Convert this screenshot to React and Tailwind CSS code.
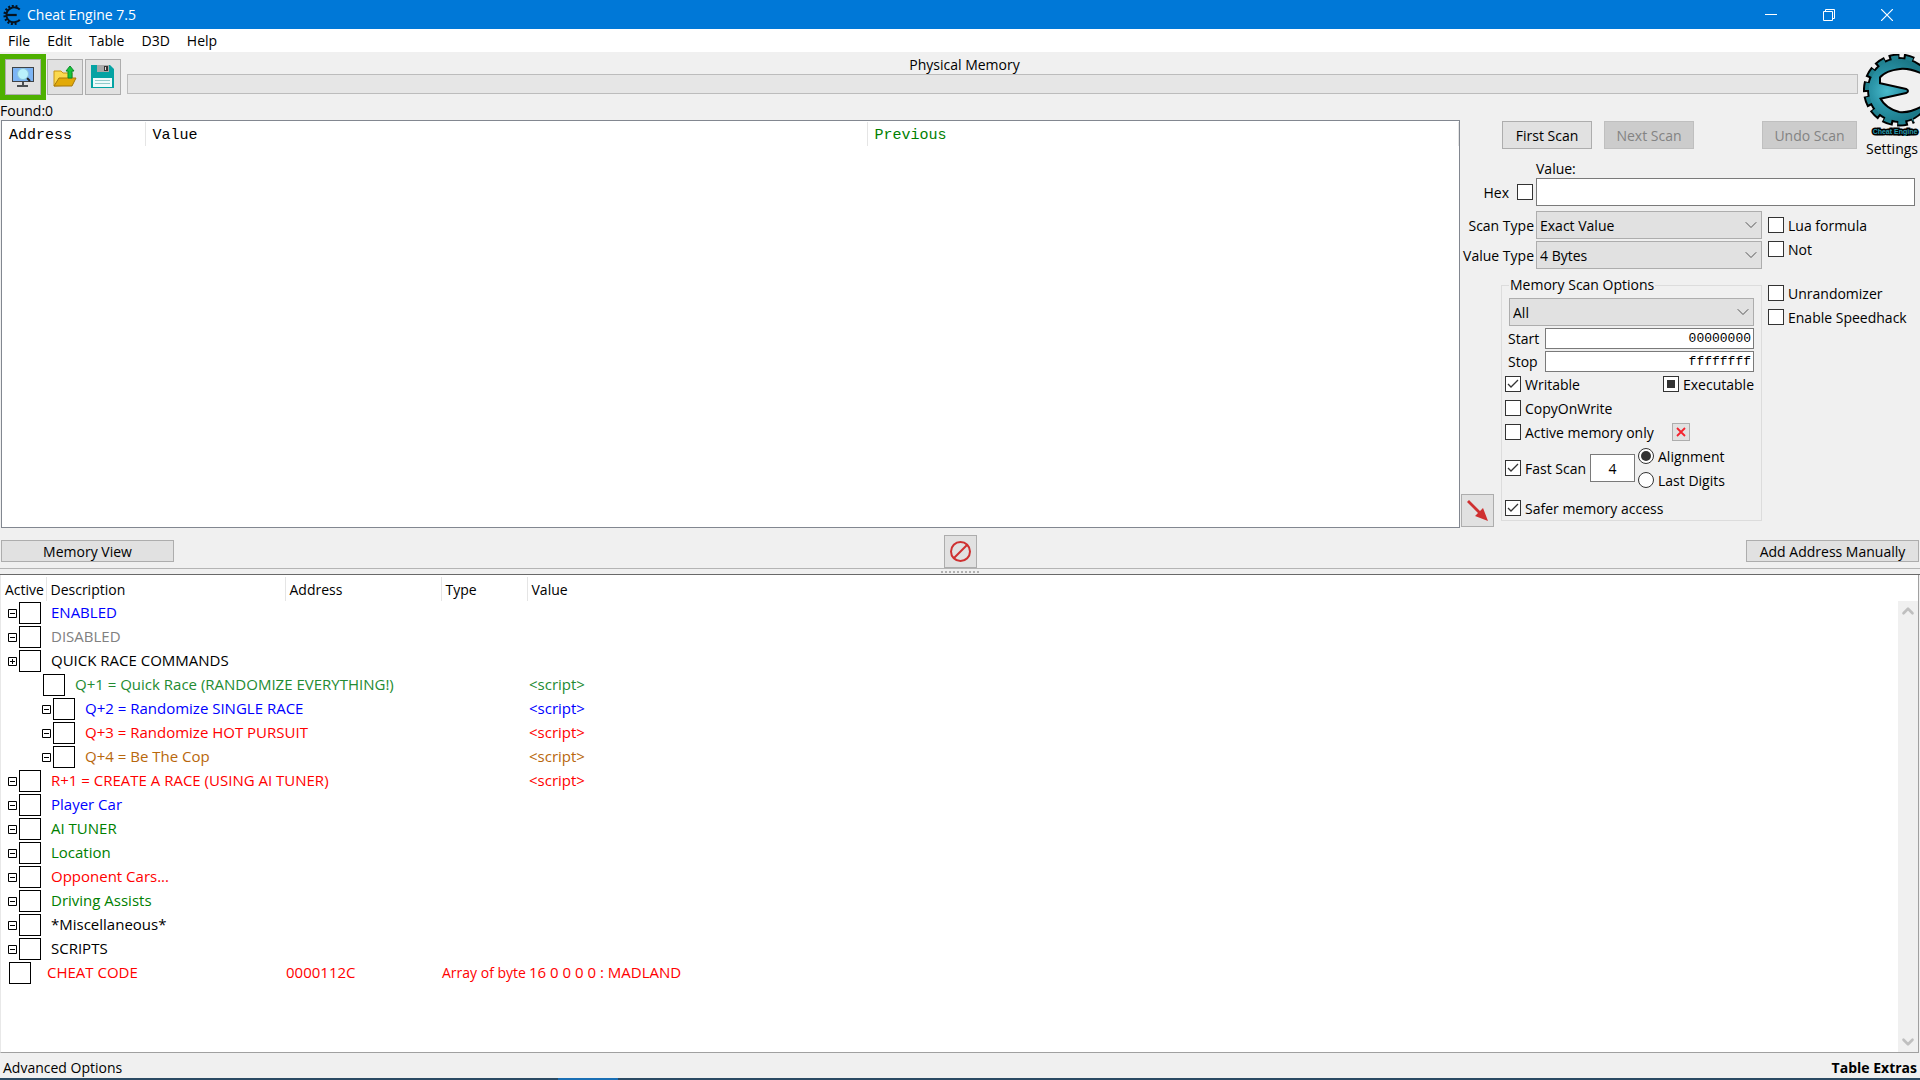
import React, { useEffect, useRef } from "react";
import { ChevronDown, ChevronUp } from "lucide-react";

const records = [
  { name: "ENABLED", color: "text-[#0000ff]", toggle: "-", indent: "pl-[7px] gap-[10px]" },
  { name: "DISABLED", color: "text-[#808080]", toggle: "-", indent: "pl-[7px] gap-[10px]" },
  { name: "QUICK RACE COMMANDS", color: "text-black", toggle: "+", indent: "pl-[7px] gap-[10px]" },
  { name: "Q+1 = Quick Race (RANDOMIZE EVERYTHING!)", color: "text-[#238b32]", indent: "pl-[42px] gap-[10px]", value: "<script>" },
  { name: "Q+2 = Randomize SINGLE RACE", color: "text-[#0000ff]", toggle: "-", indent: "pl-[41px] gap-[10px]", value: "<script>" },
  { name: "Q+3 = Randomize HOT PURSUIT", color: "text-[#ff0000]", toggle: "-", indent: "pl-[41px] gap-[10px]", value: "<script>" },
  { name: "Q+4 = Be The Cop", color: "text-[#b8670c]", toggle: "-", indent: "pl-[41px] gap-[10px]", value: "<script>" },
  { name: "R+1 = CREATE A RACE (USING AI TUNER)", color: "text-[#ff0000]", toggle: "-", indent: "pl-[7px] gap-[10px]", value: "<script>" },
  { name: "Player Car", color: "text-[#0000ff]", toggle: "-", indent: "pl-[7px] gap-[10px]" },
  { name: "AI TUNER", color: "text-[#008000]", toggle: "-", indent: "pl-[7px] gap-[10px]" },
  { name: "Location", color: "text-[#008000]", toggle: "-", indent: "pl-[7px] gap-[10px]" },
  { name: "Opponent Cars...", color: "text-[#ff0000]", toggle: "-", indent: "pl-[7px] gap-[10px]" },
  { name: "Driving Assists", color: "text-[#008000]", toggle: "-", indent: "pl-[7px] gap-[10px]" },
  { name: "*Miscellaneous*", color: "text-black", toggle: "-", indent: "pl-[7px] gap-[10px]" },
  { name: "SCRIPTS", color: "text-black", toggle: "-", indent: "pl-[7px] gap-[10px]" },
  { name: "CHEAT CODE", color: "text-[#ff0000]", indent: "pl-2 gap-4", address: "0000112C", type: "Array of byte", value: "16 0 0 0 0 : MADLAND" },
];

const BODY = "M58 13 C50 7 43 5 36 5 C18 6 6 20 6 36 C6 53 19 66 36 67 C45 67 52 64 58 58 L58 54 C50 58 44 60 36 59 C28 57 20 52 16 44 L43 38 Q45 37 43 36 L16 30 L16 23 C20 18 28 15 37 14 C44 13 50 15 58 18 Z";
const RIM = "M50 7 A32 32 0 1 0 50 65";

function GearLogo({ className, mono }) {
  return (
    <svg className={className} viewBox={mono ? "0 0 62 72" : "0 0 57 82"} aria-hidden="true">
      <defs>
        <radialGradient id="metal" gradientUnits="userSpaceOnUse" cx="24" cy="37" r="36">
          <stop offset="0" stopColor="#48b9cb" />
          <stop offset="0.45" stopColor="#2a94a7" />
          <stop offset="1" stopColor="#1b7787" />
        </radialGradient>
      </defs>
      {mono ? (
        <g fill="none" stroke="#06121f">
          <path d={RIM} strokeWidth="9" strokeDasharray="7 6" />
          <path d="M59 16 C50 8 35 6 26 12 C13 19 10 31 11 40 C13 54 25 64 39 62 C46 61 55 59 59 53" strokeWidth="7" />
          <path d="M13 36 H48" strokeWidth="8" />
        </g>
      ) : (
        <g>
          <path d={RIM} fill="none" stroke="#000" strokeWidth="9" strokeDasharray="10 4" />
          <path d={BODY} fill="#000" stroke="#000" strokeWidth="4" strokeLinejoin="round" />
          <path d={RIM} fill="none" stroke="#20818f" strokeWidth="5" strokeDasharray="7 7" strokeDashoffset="-1" />
          <path d={BODY} fill="url(#metal)" />
          <text x="32" y="80" textAnchor="middle" fontSize="7" fontWeight="700" fontFamily="Liberation Sans, sans-serif" fill="#2a9aac" stroke="#000" strokeWidth="3" paintOrder="stroke">
            Cheat Engine
          </text>
        </g>
      )}
    </svg>
  );
}

function ProcessIcon() {
  return (
    <svg className="h-6 w-6" viewBox="0 0 24 24" aria-hidden="true">
      <rect x="1" y="2" width="22" height="15" fill="#3f4347" />
      <rect x="2" y="3" width="20" height="13" fill="#7db5f5" />
      <path d="M11 17h2v3h4v2H6v-2h5z" fill="#4b4f52" />
      <path d="M15 12l4 4" stroke="#222" strokeWidth="2" />
      <circle cx="12" cy="9" r="5.500" fill="#b9f0fb" stroke="#8ac4dc" />
    </svg>
  );
}

function OpenIcon() {
  return (
    <svg className="h-6 w-6" viewBox="0 0 24 24" aria-hidden="true">
      <path d="M1 21V6h7l2 2h9v12z" fill="#fbd94f" stroke="#c79415" />
      <path d="M1 21l5-8h17l-4 8z" fill="#e2aa08" stroke="#a8790a" />
      <path d="M17 1l4 5h-2v7h-4V6h-2z" fill="#16c43b" stroke="#0b8a2a" />
    </svg>
  );
}

function SaveIcon() {
  return (
    <svg className="h-6 w-6" viewBox="0 0 24 24" aria-hidden="true">
      <path d="M0 0h19l4 4v19H0z" fill="#04a3a3" />
      <path d="M6 0h12v7H6z" fill="#a9a9a9" />
      <path d="M13 1h4v5h-4z" fill="#353535" />
      <path d="M14 2h1v3h-1z" fill="#ddd" />
      <path d="M2 13h19v9H2z" fill="#eefafa" />
      <path d="M4 15.500h15M4 18.500h15" stroke="#8fcaca" />
    </svg>
  );
}

function ToolButton({ label, children }) {
  return (
    <button aria-label={label} className="flex h-9 w-9 items-center justify-center border border-[#adadad] bg-[#e1e1e1]">
      {children}
    </button>
  );
}

function CheckField({ label, checked = false, mixed = false, className = "" }) {
  const ref = useRef(null);
  useEffect(() => {
    ref.current.indeterminate = mixed;
  }, [mixed]);

  return (
    <label className={`flex h-6 items-center gap-1 whitespace-nowrap ${className}`}>
      <span className="relative h-4 w-4 shrink-0">
        <input ref={ref} type="checkbox" defaultChecked={checked} className="peer block h-4 w-4 appearance-none border border-[#333] bg-white" />
        <svg className="pointer-events-none absolute inset-0 hidden h-4 w-4 peer-checked:block" viewBox="0 0 16 16">
          <path d="M3 8l3 3 7-7" fill="none" stroke="#333" strokeWidth="1.3" />
        </svg>
        {mixed && <span className="pointer-events-none absolute inset-1 bg-[#333]" />}
      </span>
      <span className="pt-px">{label}</span>
    </label>
  );
}

function RadioField({ label, checked = false }) {
  return (
    <label className="flex h-6 items-center gap-1 whitespace-nowrap">
      <span className="relative h-4 w-4 shrink-0">
        <input type="radio" name="fastscan" defaultChecked={checked} className="peer block h-4 w-4 appearance-none rounded-full border border-[#333] bg-white" />
        <span className="pointer-events-none absolute inset-[3px] hidden rounded-full bg-[#333] peer-checked:block" />
      </span>
      <span className="pt-px">{label}</span>
    </label>
  );
}

function ComboBox({ id, value, className = "", label }) {
  return (
    <div className={`relative h-7 ${className}`}>
      <select id={id} aria-label={label} className="h-7 w-full appearance-none border border-[#adadad] bg-[#e1e1e1] pl-[3px] pt-px">
        <option>{value}</option>
      </select>
      <ChevronDown className="pointer-events-none absolute right-px top-1 h-5 w-5 text-[#555]" strokeWidth={1.2} />
    </div>
  );
}

function TitleBar() {
  return (
    <header className="flex h-[29px] items-center bg-[#0078d7] pl-[3px] pr-1 text-white">
      <GearLogo mono className="h-5 w-[18px]" />
      <h1 className="ml-[6px]">Cheat Engine 7.5</h1>
      <div className="ml-auto flex">
        <button aria-label="Minimize" className="flex h-[29px] w-[58px] items-center justify-center">
          <svg className="h-3 w-3" viewBox="0 0 12 12"><path d="M0 5.5h12" stroke="#fff" /></svg>
        </button>
        <button aria-label="Restore" className="flex h-[29px] w-[58px] items-center justify-center">
          <svg className="h-3 w-3" viewBox="0 0 12 12"><path d="M.5 2.5h9v9h-9zM2.500 2V.5h9v9h-1.500" fill="none" stroke="#fff" /></svg>
        </button>
        <button aria-label="Close" className="flex h-[29px] w-[58px] items-center justify-center">
          <svg className="h-3 w-3" viewBox="0 0 12 12"><path d="M0 0l12 12M12 0L0 12" stroke="#fff" strokeWidth="1.2" /></svg>
        </button>
      </div>
    </header>
  );
}

function FoundList() {
  return (
    <section className="col-start-1 row-span-2 row-start-2 flex flex-col">
      <p className="h-[19px] leading-5">Found:0</p>
      <div className="mx-px flex-1 border border-[#828790] bg-white pt-px">
        <table className="w-full table-fixed text-left font-['Liberation_Mono',monospace] text-[15px]">
          <colgroup>
            <col className="w-[143px]" />
            <col className="w-[722px]" />
            <col />
          </colgroup>
          <thead>
            <tr className="h-6">
              <th className="border-r border-[#e5e5e5] p-0 pl-[7px] pt-[3px] font-normal">Address</th>
              <th className="border-r border-[#e5e5e5] p-0 pl-[7px] pt-[3px] font-normal">Value</th>
              <th className="border-r border-[#e5e5e5] p-0 pl-[7px] pt-[3px] font-normal text-[#008000]">Previous</th>
            </tr>
          </thead>
        </table>
      </div>
    </section>
  );
}

function ScanOptions() {
  return (
    <fieldset className="mb-[6px] w-[261px] border border-[#dcdcdc] px-[3px]">
      <legend className="ml-1 px-px leading-5">Memory Scan Options</legend>
      <ComboBox label="Memory region" value="All" className="mx-1 mt-[3px]" />
      <div className="mr-1 mt-[2px] flex h-[21px] items-center">
        <label htmlFor="start" className="w-10 pl-[3px]">Start</label>
        <input id="start" defaultValue="00000000" className="h-[21px] min-w-0 flex-1 border border-[#7a7a7a] bg-white px-[2px] text-right font-['Liberation_Mono',monospace] text-[13px]" />
      </div>
      <div className="mr-1 mt-[2px] flex h-[21px] items-center">
        <label htmlFor="stop" className="w-10 pl-[3px]">Stop</label>
        <input id="stop" defaultValue="ffffffff" className="h-[21px] min-w-0 flex-1 border border-[#7a7a7a] bg-white px-[2px] text-right font-['Liberation_Mono',monospace] text-[13px]" />
      </div>
      <div className="mr-1 flex justify-between">
        <CheckField label="Writable" checked />
        <CheckField label="Executable" mixed />
      </div>
      <CheckField label="CopyOnWrite" />
      <div className="flex items-center justify-between">
        <CheckField label="Active memory only" />
        <button aria-label="Unpause" className="mr-[68px] flex h-[18px] w-[18px] items-center justify-center border border-[#adadad] bg-[#e1e1e1]">
          <svg className="h-[10px] w-[10px]" viewBox="0 0 10 10"><path d="M1 1l8 8M9 1L1 9" stroke="#f5222d" strokeWidth="1.8" /></svg>
        </button>
      </div>
      <div className="flex items-center">
        <CheckField label="Fast Scan" checked className="w-[85px]" />
        <input aria-label="Alignment value" defaultValue="4" className="mr-[3px] h-7 w-[45px] border border-[#7a7a7a] bg-white text-center" />
        <div>
          <RadioField label="Alignment" checked />
          <RadioField label="Last Digits" />
        </div>
      </div>
      <CheckField label="Safer memory access" checked className="mt-1" />
    </fieldset>
  );
}

function ScanPanel() {
  return (
    <section className="col-span-2 col-start-2 row-start-3">
      <label htmlFor="value" className="block h-[18px] pl-[75px] leading-[18px]">Value:</label>
      <div className="flex h-7 items-center pr-[5px]">
        <label className="flex w-[75px] items-center justify-end gap-2 pr-[3px]">
          <span className="pt-px">Hex</span>
          <input type="checkbox" className="h-4 w-4 appearance-none border border-[#333] bg-white" />
        </label>
        <input id="value" className="h-7 min-w-0 flex-1 border border-[#7a7a7a] bg-white px-1" />
      </div>
      <div className="mt-[5px] flex">
        <div className="w-[301px]">
          <div className="flex items-center">
            <label htmlFor="scantype" className="w-[75px] pr-[2px] pt-px text-right">Scan Type</label>
            <ComboBox id="scantype" value="Exact Value" className="flex-1" />
          </div>
          <div className="mt-[2px] flex items-center">
            <label htmlFor="valuetype" className="w-[75px] whitespace-nowrap pr-[2px] pt-px text-right">Value Type</label>
            <ComboBox id="valuetype" value="4 Bytes" className="flex-1" />
          </div>
          <div className="mt-[6px] flex items-end gap-[7px]">
            <button aria-label="Copy to address list" className="flex h-[33px] w-[33px] items-center justify-center border border-[#adadad] bg-[#e1e1e1]">
              <svg className="h-[23px] w-[23px]" viewBox="0 0 23 23">
                <path d="M1 3l2-2 11 11 3-3 5 13-13-5 3-3z" fill="#cf3030" />
              </svg>
            </button>
            <ScanOptions />
          </div>
        </div>
        <div className="pl-[6px] pt-[2px]">
          <CheckField label="Lua formula" />
          <CheckField label="Not" />
          <CheckField label="Unrandomizer" className="mt-5" />
          <CheckField label="Enable Speedhack" />
        </div>
      </div>
    </section>
  );
}

function AddressList() {
  return (
    <section className="mr-px flex flex-1 border-b border-l border-r border-b-[#a0a0a0] border-l-[#e8e8e8] border-r-[#a0a0a0] bg-white">
      <div className="flex-1 pt-[2px]">
        <table className="w-full table-fixed text-left">
          <colgroup>
            <col className="w-[45px]" />
            <col className="w-[239px]" />
            <col className="w-[156px]" />
            <col className="w-[86px]" />
            <col />
          </colgroup>
          <thead>
            <tr className="h-6">
              <th className="border-r border-[#e5e5e5] p-0 pl-1 pt-[2px] font-normal">Active</th>
              <th className="border-r border-[#e5e5e5] p-0 pl-1 pt-[2px] font-normal">Description</th>
              <th className="border-r border-[#e5e5e5] p-0 pl-1 pt-[2px] font-normal">Address</th>
              <th className="border-r border-[#e5e5e5] p-0 pl-1 pt-[2px] font-normal">Type</th>
              <th className="p-0 pl-1 pt-[2px] font-normal">Value</th>
            </tr>
          </thead>
          <tbody className="text-[15px]">
            {records.map((record) => (
              <tr key={record.name} className={`h-6 whitespace-nowrap leading-[22px] ${record.color}`}>
                <td colSpan={2} className="p-0">
                  <label className={`flex h-6 items-center ${record.indent}`}>
                    <span className="flex items-center gap-[2px]">
                      {record.toggle && (
                        <svg className="h-[9px] w-[9px]" viewBox="0 0 9 9">
                          <path d={record.toggle === "+" ? "M.5.5h8v8h-8zM2 4.500h5M4.500 2v5" : "M.5.5h8v8h-8zM2 4.500h5"} fill="none" stroke="#000" />
                        </svg>
                      )}
                      <input type="checkbox" className="h-[22px] w-[22px] shrink-0 appearance-none border border-black bg-white" />
                    </span>
                    <span className="pb-[2px]">{record.name}</span>
                  </label>
                </td>
                <td className="p-0 pb-[2px] pl-px">{record.address}</td>
                <td className="p-0 pb-px pl-px text-[14px]">{record.type}</td>
                <td className="p-0 pb-[2px] pl-[2px]">{record.value}</td>
              </tr>
            ))}
          </tbody>
        </table>
      </div>
      <div className="mt-[26px] flex w-5 flex-col items-center justify-between bg-[#f0f0f0] py-px text-[#bfbfbf]">
        <ChevronUp className="h-[18px] w-[18px]" strokeWidth={3.5} />
        <ChevronDown className="h-[18px] w-[18px]" strokeWidth={3.5} />
      </div>
    </section>
  );
}

export default function App() {
  return (
    <div className="flex min-h-screen flex-col bg-[#f0f0f0] font-['Open_Sans',sans-serif] text-[14px] leading-5 text-black">
      <TitleBar />
      <nav className="flex h-[23px] items-center gap-px bg-white pt-px">
        {["File", "Edit", "Table", "D3D", "Help"].map((item) => (
          <button key={item} className="px-2">{item}</button>
        ))}
      </nav>

      <main className="flex flex-1 flex-col">
        <div className="grid grid-cols-[minmax(0,1fr)_397px_62px] grid-rows-[49px_59px_368px]">
          <div className="col-span-2 flex">
            <div className="mt-[2px] flex h-[46px] w-[46px] items-center justify-center bg-[#4eb000]">
              <ToolButton label="Open process"><ProcessIcon /></ToolButton>
            </div>
            <div className="ml-px mt-[7px] flex gap-[2px]">
              <ToolButton label="Load table"><OpenIcon /></ToolButton>
              <ToolButton label="Save table"><SaveIcon /></ToolButton>
            </div>
            <div className="ml-[6px] flex-1 text-center">
              <p className="h-[22px] pr-14 pt-[3px]">Physical Memory</p>
              <div role="progressbar" aria-label="Scan progress" className="h-5 border border-[#bcbcbc] bg-[#e6e6e6]" />
            </div>
          </div>

          <button className="col-start-3 row-span-2 row-start-1 flex flex-col items-end pt-[2px]">
            <GearLogo className="h-[82px] w-[57px]" />
            <span className="mr-[2px] mt-[3px]">Settings</span>
          </button>

          <FoundList />

          <div className="col-start-2 row-start-2 flex pl-[41px] pr-px pt-5">
            <button className="h-7 w-[90px] border border-[#adadad] bg-[#e1e1e1] pt-px">First Scan</button>
            <button disabled className="ml-3 h-7 w-[90px] border border-[#bfbfbf] bg-[#cccccc] pt-px text-[#838383]">Next Scan</button>
            <button disabled className="ml-auto h-7 w-[95px] border border-[#bfbfbf] bg-[#cccccc] pt-px text-[#838383]">Undo Scan</button>
          </div>

          <ScanPanel />
        </div>

        <div className="grid h-10 grid-cols-[1fr_auto_1fr] items-center px-px pt-[6px]">
          <button className="flex h-[22px] w-[173px] items-center justify-center border border-[#adadad] bg-[#e1e1e1] pt-px">Memory View</button>
          <button aria-label="Clear list" className="flex h-[33px] w-[33px] items-center justify-center border border-[#adadad] bg-[#e1e1e1]">
            <svg className="h-[21px] w-[21px]" viewBox="0 0 21 21">
              <circle cx="10.500" cy="10.500" r="9.500" fill="none" stroke="#cf3030" strokeWidth="2" />
              <path d="M4 17L17 4" stroke="#cf3030" strokeWidth="2" />
            </svg>
          </button>
          <button className="flex h-[22px] w-[173px] items-center justify-center justify-self-end border border-[#adadad] bg-[#e1e1e1] pt-px">Add Address Manually</button>
        </div>

        <div className="flex h-[7px] items-center justify-center border-b border-t border-b-[#696969] border-t-[#b4b4b4]">
          <div className="w-[38px] border-t-2 border-dotted border-[#b0b0b0]" />
        </div>

        <AddressList />
      </main>

      <footer>
        <div className="flex h-[25px] items-center justify-between px-[3px] pt-1">
          <button>Advanced Options</button>
          <button className="font-bold">Table Extras</button>
        </div>
        <div className="h-[2px] bg-[#2b4a63] pl-[558px]">
          <div className="h-[2px] w-[60px] bg-[#1a6fb5]" />
        </div>
      </footer>
    </div>
  );
}
